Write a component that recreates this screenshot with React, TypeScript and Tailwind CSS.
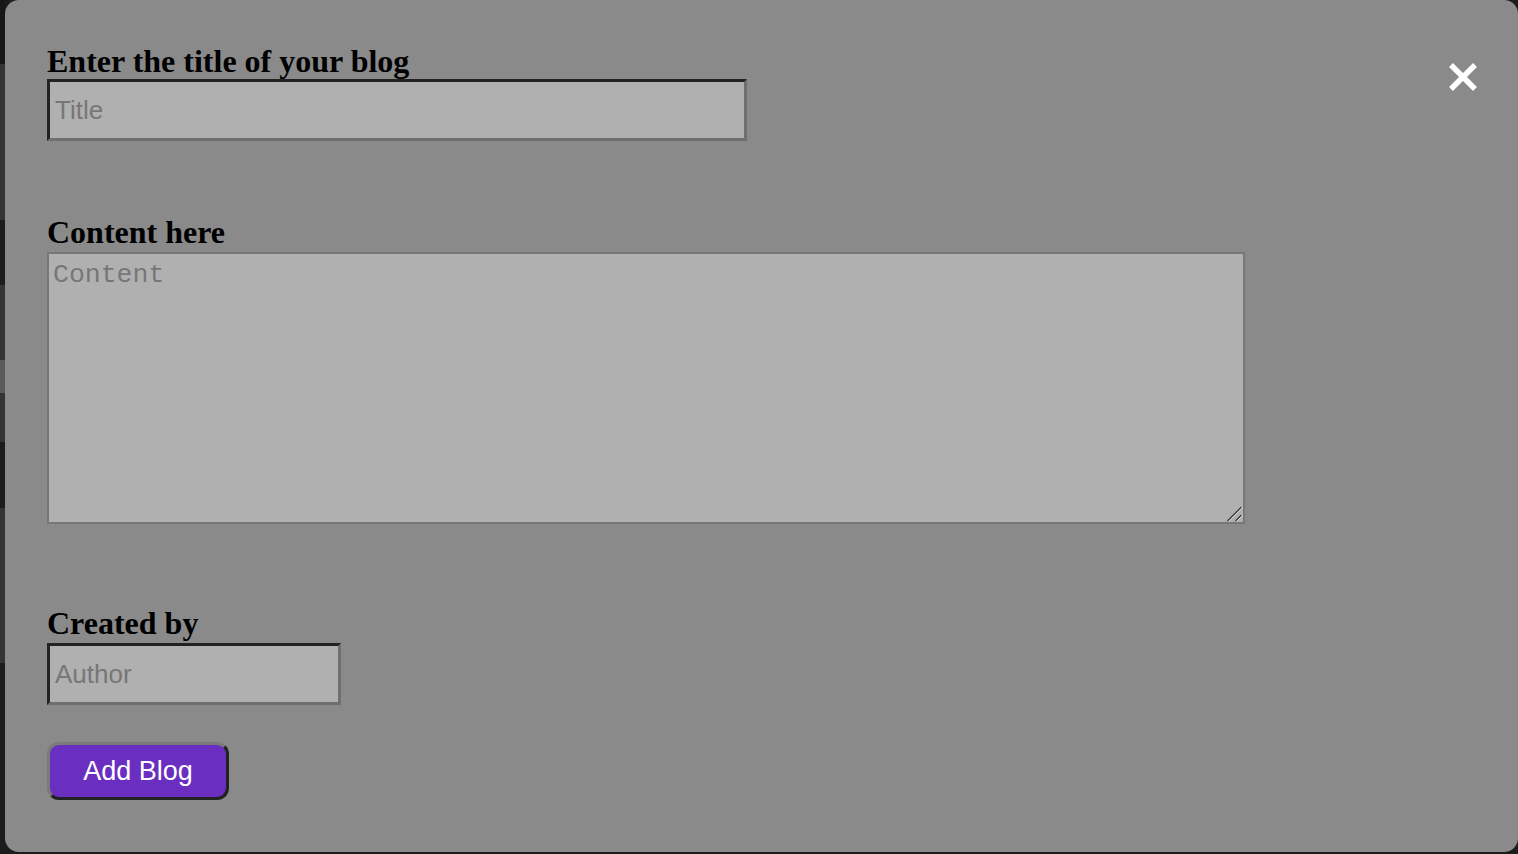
import React from 'react'

const strip = [
  { h: 64, c: 'bg-[#181818]' },
  { h: 156, c: 'bg-[#343434]' },
  { h: 65, c: 'bg-[#1c1c1c]' },
  { h: 75, c: 'bg-[#343434]' },
  { h: 33, c: 'bg-[#5a5a5a]' },
  { h: 49, c: 'bg-[#343434]' },
  { h: 66, c: 'bg-[#1c1c1c]' },
  { h: 155, c: 'bg-[#343434]' },
  { h: 191, c: 'bg-[#1c1c1c]' },
]

const labelCls =
  "block text-[32px] leading-[36px] font-bold text-black font-['Liberation_Serif',serif]"

const inputCls =
  "block h-[62px] border-[3px] border-t-[#222] border-l-[#222] border-b-[#6f6f6f] border-r-[#6f6f6f] bg-[#b0b0b0] px-[5px] text-[26px] font-['Liberation_Sans',Arial,sans-serif] text-black outline-none placeholder:text-[#777]"

export default function App() {
  return (
    <div className="flex h-[854px] w-full overflow-hidden bg-[#1c1c1c]">
      <div className="flex w-[5px] shrink-0 flex-col">
        {strip.map((s, i) => (
          <div key={i} className={s.c} style={{ height: s.h }} />
        ))}
      </div>

      <div className="relative mb-[2px] flex-1 rounded-[14px] bg-[#8a8a8a] pl-[42px] pt-[43px]">
        <button className="absolute right-[40px] top-[62px] flex h-[30px] w-[30px] items-center justify-center">
          <svg width="30" height="30" viewBox="0 0 30 30">
            <path d="M3 3 L27 27 M27 3 L3 27" stroke="#fff" strokeWidth="5.5" />
          </svg>
        </button>

        <label className={labelCls}>Enter the title of your blog</label>
        <input placeholder="Title" className={`${inputCls} w-[700px]`} />

        <label className={`${labelCls} mt-[73px]`}>Content here</label>
        <div className="relative mt-[2px] w-[1198px]">
          <textarea
            placeholder="Content"
            className="block h-[272px] w-full resize-none border-2 border-[#777] bg-[#b0b0b0] px-[4px] pt-[6px] text-[26.5px] leading-[30px] font-['Liberation_Mono','Courier_New',monospace] text-black outline-none placeholder:text-[#777]"
          />
          <svg
            className="pointer-events-none absolute bottom-[2px] right-[2px]"
            width="18"
            height="18"
            viewBox="0 0 18 18"
          >
            <path d="M2.5 17 L16.5 3 M10.5 17 L16.5 11" stroke="#f0f0f0" strokeWidth="1.2" transform="translate(1,0)" />
            <path d="M2.5 17 L16.5 3 M10.5 17 L16.5 11" stroke="#3a3a3a" strokeWidth="1.4" />
          </svg>
        </div>

        <label className={`${labelCls} mt-[81px]`}>Created by</label>
        <input placeholder="Author" className={`${inputCls} mt-[2px] w-[294px]`} />

        <button className="mt-[37px] block h-[58px] w-[182px] rounded-[12px] border-[3px] border-t-[#7a7a7a] border-l-[#7a7a7a] border-b-[#222] border-r-[#222] bg-[#6a2ec0] text-[27px] font-['Liberation_Sans',Arial,sans-serif] text-white">
          Add Blog
        </button>
      </div>
    </div>
  )
}
